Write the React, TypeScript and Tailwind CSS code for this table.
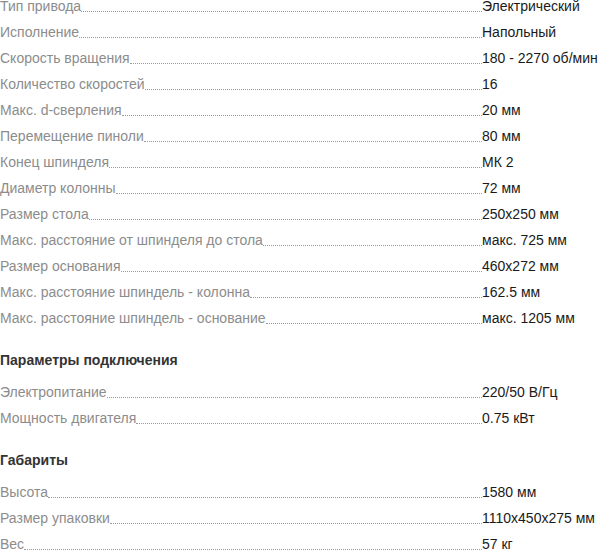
const general: [string, string][] = [
  ['Тип привода', 'Электрический'],
  ['Исполнение', 'Напольный'],
  ['Скорость вращения', '180 - 2270 об/мин'],
  ['Количество скоростей', '16'],
  ['Макс. d-сверления', '20 мм'],
  ['Перемещение пиноли', '80 мм'],
  ['Конец шпинделя', 'МК 2'],
  ['Диаметр колонны', '72 мм'],
  ['Размер стола', '250x250 мм'],
  ['Макс. расстояние от шпинделя до стола', 'макс. 725 мм'],
  ['Размер основания', '460x272 мм'],
  ['Макс. расстояние шпиндель - колонна', '162.5 мм'],
  ['Макс. расстояние шпиндель - основание', 'макс. 1205 мм'],
];

const power: [string, string][] = [
  ['Электропитание', '220/50 В/Гц'],
  ['Мощность двигателя', '0.75 кВт'],
];

const size: [string, string][] = [
  ['Высота', '1580 мм'],
  ['Размер упаковки', '1110x450x275 мм'],
  ['Вес', '57 кг'],
];

function Row({ label, value }: { label: string; value: string }) {
  return (
    <div className="flex items-baseline h-[26px]">
      <span className="text-[#8c8c8c] whitespace-nowrap">{label}</span>
      <span className="flex-1 border-b border-dotted border-[#9a9a9a] translate-y-[1px]" />
      <span className="w-[116px] shrink-0 text-[#1a1a1a] whitespace-nowrap">{value}</span>
    </div>
  );
}

export default function App() {
  return (
    <div
      className="w-[598px] h-[554px] bg-white overflow-hidden text-[14px] leading-[16px] pt-[-2px]"
      style={{ fontFamily: '"Liberation Sans", Arial, sans-serif' }}
    >
      <div className="-mt-[2px]">
        {general.map(([l, v]) => (
          <Row key={l} label={l} value={v} />
        ))}
      </div>
      <div className="mt-[16px] mb-[16px] font-bold text-[#333] h-[16px]">Параметры подключения</div>
      <div>
        {power.map(([l, v]) => (
          <Row key={l} label={l} value={v} />
        ))}
      </div>
      <div className="mt-[16px] mb-[16px] font-bold text-[#333] h-[16px]">Габариты</div>
      <div>
        {size.map(([l, v]) => (
          <Row key={l} label={l} value={v} />
        ))}
      </div>
    </div>
  );
}
